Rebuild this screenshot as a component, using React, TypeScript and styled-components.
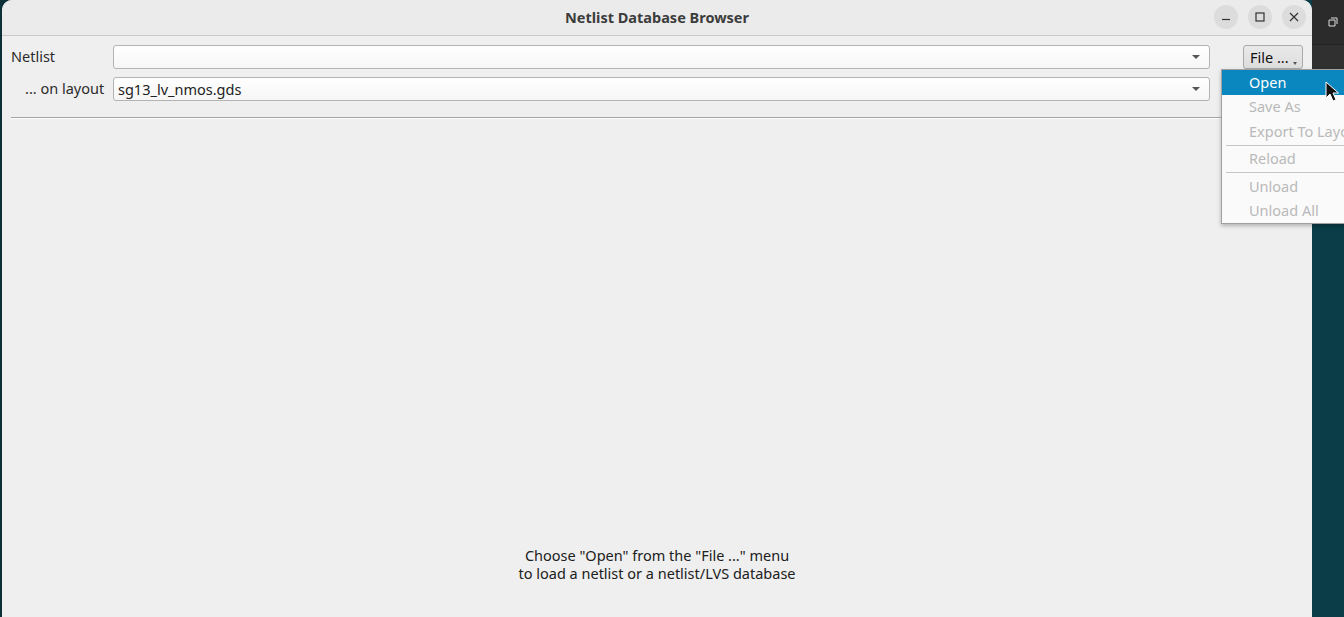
import React from 'react';
import styled, { createGlobalStyle } from 'styled-components';

const GlobalStyle = createGlobalStyle`
  html, body {
    margin: 0;
    padding: 0;
    overflow: hidden;
  }
  body {
    font-family: 'Noto Sans', 'DejaVu Sans', sans-serif;
    color: #2e2e2e;
  }
`;

const Desktop = styled.div`
  position: relative;
  width: 1344px;
  height: 617px;
  display: flex;
  background: linear-gradient(90deg, #0b2f36 0%, #0a3d47 30%, #0a3d47 100%);
  overflow: hidden;
`;

const LeftEdge = styled.div`
  width: 2px;
  flex-shrink: 0;
  background: #0b3038;
`;

const Window = styled.div`
  width: 1310px;
  flex-shrink: 0;
  display: flex;
  flex-direction: column;
  background: #efefef;
  border-radius: 10px 10px 0 0;
  overflow: hidden;
`;

const TitleBar = styled.div`
  height: 35px;
  flex-shrink: 0;
  display: flex;
  align-items: center;
  justify-content: center;
  position: relative;
  background: #ebebeb;
  border-bottom: 1px solid #c9c9c9;
`;

const Title = styled.div`
  font-size: 14.5px;
  font-weight: 700;
  color: #3c3c3c;
  padding-bottom: 2px;
`;

const Controls = styled.div`
  position: absolute;
  right: 6px;
  top: 5px;
  display: flex;
  gap: 10px;
`;

const CtrlButton = styled.div`
  width: 24px;
  height: 24px;
  border-radius: 50%;
  background: #dcdcdc;
  display: flex;
  align-items: center;
  justify-content: center;
`;

const Body = styled.div`
  flex: 1;
  display: flex;
  flex-direction: column;
  padding: 9px 9px 0 9px;
`;

const Form = styled.div`
  display: grid;
  grid-template-columns: 102px 1fr 93px;
  row-gap: 8px;
  align-items: center;
`;

const Label = styled.div<{ $indent?: number }>`
  font-size: 14.5px;
  line-height: 20px;
  color: #2b2b2b;
  padding-left: ${(p) => p.$indent ?? 0}px;
  padding-bottom: 2px;
`;

const Combo = styled.div`
  height: 24px;
  box-sizing: border-box;
  border: 1px solid #b3b3b3;
  border-radius: 3px;
  background: linear-gradient(#ffffff, #f6f6f6);
  display: flex;
  align-items: center;
  padding: 0 9px 1px 4px;
  font-size: 14.5px;
  color: #222;
`;

const ComboText = styled.span`
  flex: 1;
`;

const Arrow = styled.span`
  width: 0;
  height: 0;
  margin-top: 1px;
  border-left: 4px solid transparent;
  border-right: 4px solid transparent;
  border-top: 4px solid #555;
`;

const FileButton = styled.div`
  justify-self: end;
  width: 60px;
  position: relative;
  height: 24px;
  box-sizing: border-box;
  border: 1px solid #a9a9a9;
  border-radius: 3px;
  background: linear-gradient(#e9e9e9, #dddddd);
  display: flex;
  align-items: center;
  padding: 0 0 1px 6px;
  font-size: 14.5px;
  color: #111;
`;

const MenuIndicator = styled.span`
  position: absolute;
  right: 5px;
  bottom: 3px;
  border-left: 2.5px solid transparent;
  border-right: 2.5px solid transparent;
  border-top: 3px solid #555;
`;

const Divider = styled.div`
  margin-top: 16px;
  height: 1px;
  background: #a3a3a3;
  border-bottom: 1px solid #ffffff;
`;

const Message = styled.div`
  flex: 1;
  display: flex;
  flex-direction: column;
  justify-content: flex-end;
  align-items: center;
  padding-bottom: 35px;
  font-size: 14.5px;
  line-height: 18px;
  color: #202020;
  text-align: center;
`;

const SideStrip = styled.div`
  flex: 1;
  display: flex;
  flex-direction: column;
`;

const DarkPanel = styled.div<{ $h: number; $bg: string }>`
  height: ${(p) => p.$h}px;
  background: ${(p) => p.$bg};
  border-bottom: 1px solid #222;
  display: flex;
  align-items: center;
  justify-content: flex-end;
  padding-right: 6px;
`;

const Menu = styled.div`
  position: absolute;
  left: 1221px;
  top: 69px;
  width: 140px;
  padding: 0;
  background: #fafafa;
  border: 1px solid #a0a0a0;
  box-shadow: 0 2px 4px rgba(0, 0, 0, 0.25);
  font-size: 14.5px;
`;

const MenuItem = styled.div<{ $active?: boolean }>`
  height: 24.5px;
  display: flex;
  align-items: center;
  padding: 0 0 1px 27px;
  box-sizing: border-box;
  white-space: nowrap;
  background: ${(p) => (p.$active ? '#0987be' : 'transparent')};
  color: ${(p) => (p.$active ? '#ffffff' : '#b9b9b9')};
`;

const MenuSep = styled.div`
  height: 1px;
  margin: 1px 0 1px 4px;
  background: #c6c6c6;
`;

const Cursor = styled.svg`
  position: absolute;
  left: 1325px;
  top: 81px;
`;

const items: { label: string; active?: boolean; sepBefore?: boolean }[] = [
  { label: 'Open', active: true },
  { label: 'Save As' },
  { label: 'Export To Layout' },
  { label: 'Reload', sepBefore: true },
  { label: 'Unload', sepBefore: true },
  { label: 'Unload All' },
];

const App: React.FC = () => (
  <>
    <GlobalStyle />
    <Desktop>
      <LeftEdge />
      <Window>
        <TitleBar>
          <Title>Netlist Database Browser</Title>
          <Controls>
            <CtrlButton>
              <svg width="10" height="10" viewBox="0 0 10 10">
                <path d="M1 7.5h8" stroke="#333" strokeWidth="1.2" />
              </svg>
            </CtrlButton>
            <CtrlButton>
              <svg width="10" height="10" viewBox="0 0 10 10">
                <rect x="1" y="1" width="8" height="8" fill="none" stroke="#333" strokeWidth="1.2" />
              </svg>
            </CtrlButton>
            <CtrlButton>
              <svg width="10" height="10" viewBox="0 0 10 10">
                <path d="M1 1l8 8M9 1l-8 8" stroke="#333" strokeWidth="1.2" />
              </svg>
            </CtrlButton>
          </Controls>
        </TitleBar>
        <Body>
          <Form>
            <Label>Netlist</Label>
            <Combo>
              <ComboText />
              <Arrow />
            </Combo>
            <FileButton>
              File ...
              <MenuIndicator />
            </FileButton>
            <Label $indent={14}>... on layout</Label>
            <Combo>
              <ComboText>sg13_lv_nmos.gds</ComboText>
              <Arrow />
            </Combo>
            <div />
          </Form>
          <Divider />
          <Message>
            <div>Choose "Open" from the "File ..." menu</div>
            <div>to load a netlist or a netlist/LVS database</div>
          </Message>
        </Body>
      </Window>
      <SideStrip>
        <DarkPanel $h={44} $bg="#2b2b2b">
          <svg width="10" height="10" viewBox="0 0 10 10">
            <path d="M3 1h6v6M1 3h6v6H1z" fill="none" stroke="#ddd" strokeWidth="1" />
          </svg>
        </DarkPanel>
        <DarkPanel $h={178} $bg="#303030" />
      </SideStrip>
      <Menu>
        {items.map((it) => (
          <React.Fragment key={it.label}>
            {it.sepBefore && <MenuSep />}
            <MenuItem $active={it.active}>{it.label}</MenuItem>
          </React.Fragment>
        ))}
      </Menu>
      <Cursor width="14" height="22" viewBox="0 0 14 22">
        <path
          d="M1 1v16l4-4 3 7 3-1.3-3-6.7h5.5z"
          fill="#111"
          stroke="#fff"
          strokeWidth="1"
          strokeLinejoin="round"
        />
      </Cursor>
    </Desktop>
  </>
);

export default App;
